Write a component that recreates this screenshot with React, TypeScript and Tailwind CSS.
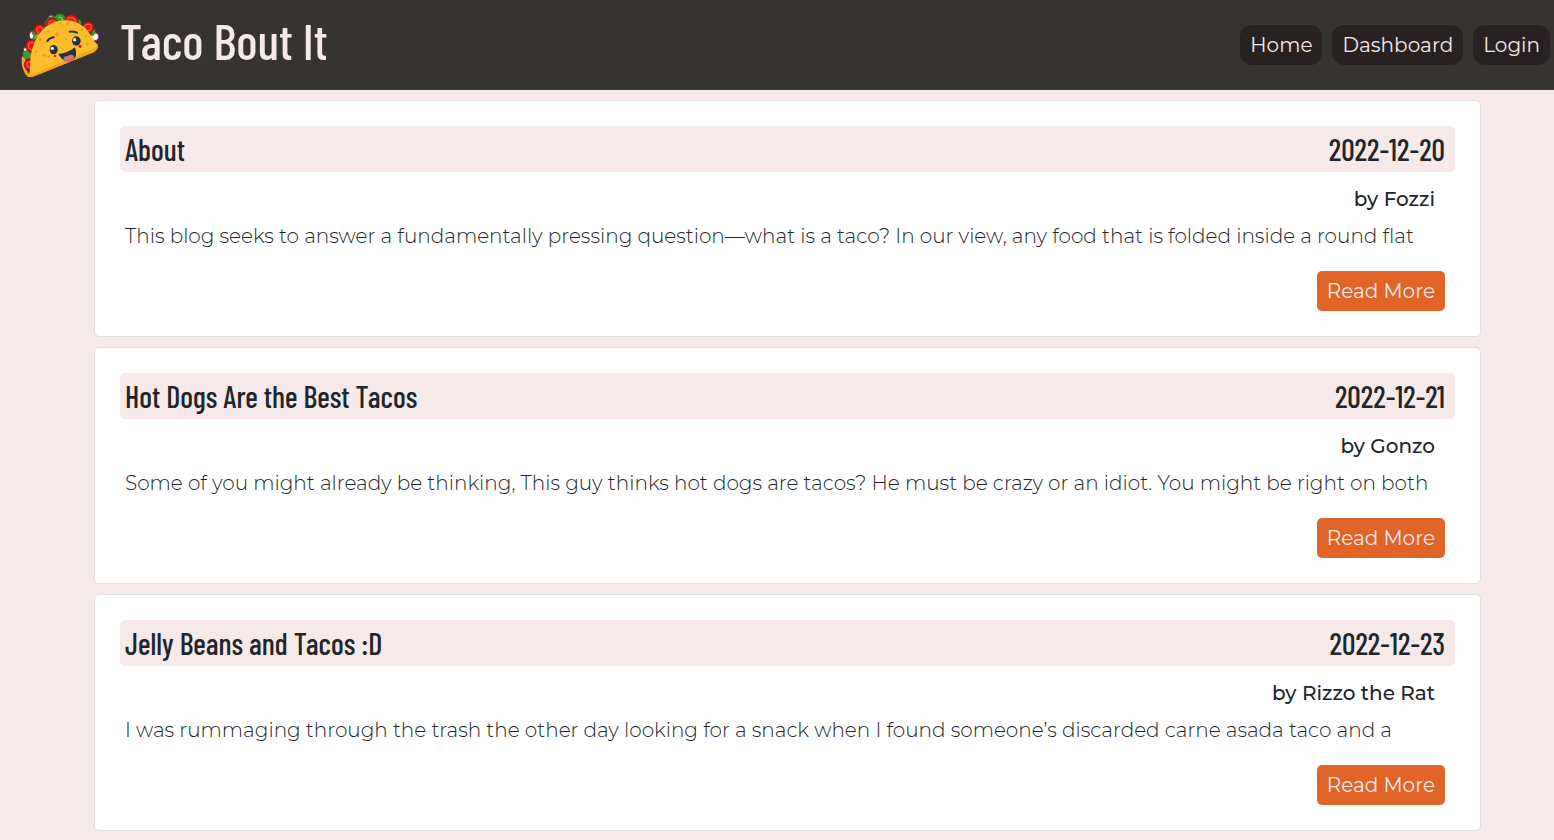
const posts = [
  {
    title: "About",
    date: "2022-12-20",
    author: "Fozzi",
    text: "This blog seeks to answer a fundamentally pressing question—what is a taco? In our view, any food that is folded inside a round flat",
  },
  {
    title: "Hot Dogs Are the Best Tacos",
    date: "2022-12-21",
    author: "Gonzo",
    text: "Some of you might already be thinking, This guy thinks hot dogs are tacos? He must be crazy or an idiot. You might be right on both",
  },
  {
    title: "Jelly Beans and Tacos :D",
    date: "2022-12-23",
    author: "Rizzo the Rat",
    text: "I was rummaging through the trash the other day looking for a snack when I found someone’s discarded carne asada taco and a",
  },
];

function TacoLogo() {
  return (
    <svg viewBox="30 36 240 198" className="h-[66px] w-20 shrink-0" aria-hidden="true">
      <path d="M36 170 C32 192 40 220 54 230 L72 228 L66 160Z" fill="#f5a623" />
      <path d="M46 178 Q40 200 56 222 L68 215 L66 175Z" fill="#7c2d12" />
      <g fill="#ffffff" stroke="#a21c6b" strokeWidth="3">
        <circle cx="70" cy="106" r="12" />
        <circle cx="124" cy="55" r="9" />
        <circle cx="254" cy="110" r="12" />
        <circle cx="48" cy="150" r="8" />
      </g>
      <g fill="#3f9b2f" stroke="#1d6b24" strokeWidth="2">
        <path d="M104 68 Q112 48 134 50 Q142 38 154 42 Q170 46 166 66 L110 90Z" />
        <path d="M66 100 Q72 80 90 84 Q104 76 114 92 L84 122Z" />
        <path d="M54 178 Q38 176 38 160 Q42 148 60 154 L72 170Z" />
        <path d="M194 62 Q206 50 216 68 L208 80Z" />
        <path d="M242 86 Q256 82 256 98 L248 108Z" />
      </g>
      <g fill="#e51b12" stroke="#8f110d" strokeWidth="3">
        <circle cx="184" cy="64" r="20" />
        <circle cx="127" cy="73" r="19" />
        <circle cx="89" cy="90" r="17" />
        <circle cx="234" cy="82" r="17" />
        <circle cx="66" cy="138" r="19" />
        <circle cx="60" cy="194" r="17" />
      </g>
      <g fill="none" stroke="#ff6247" strokeWidth="3">
        <circle cx="184" cy="64" r="12" />
        <circle cx="127" cy="73" r="11" />
        <circle cx="89" cy="90" r="9" />
        <circle cx="234" cy="82" r="10" />
        <circle cx="66" cy="138" r="11" />
        <circle cx="60" cy="194" r="9" />
      </g>
      <g fill="none" strokeLinecap="round">
        <path d="M106 84 Q104 96 94 108 M146 52 Q160 50 160 64 M72 116 Q76 106 86 104" stroke="#2f8a2c" strokeWidth="10" />
        <path d="M106 84 Q104 94 96 104 M146 52 Q156 50 158 60 M74 114 Q78 107 86 105" stroke="#8bc34a" strokeWidth="4" />
      </g>
      <path
        d="M53 230 C61 224 60 205 61 185 C63 137 84 91 125 70 C167 49 215 66 235 95 C247 110 252 126 262 132 C267 146 258 153 246 158 L72 228 Q59 233 53 230Z"
        fill="#fcbd2d"
      />
      <path d="M54 229 Q64 224 77 220 L245 150 Q257 145 263 135 Q266 148 252 157 L76 228 Q61 233 54 229Z" fill="#f2a126" />
      <g fill="#f2981f">
        <circle cx="115" cy="94" r="4" />
        <circle cx="141" cy="103" r="6" />
        <circle cx="91" cy="119" r="5" />
        <circle cx="103" cy="166" r="5" />
        <circle cx="116" cy="169" r="4" />
        <circle cx="98" cy="184" r="2" />
        <circle cx="149" cy="71" r="3" />
        <circle cx="160" cy="78" r="2" />
        <circle cx="172" cy="72" r="3" />
        <circle cx="196" cy="76" r="2" />
        <circle cx="216" cy="88" r="4" />
        <circle cx="228" cy="108" r="3" />
        <circle cx="232" cy="132" r="4" />
        <circle cx="78" cy="155" r="3" />
        <circle cx="168" cy="118" r="3" />
      </g>
      <path d="M112 123 Q119 113 131 112 M179 95 Q190 93 201 98" fill="none" stroke="#26313b" strokeWidth="6" strokeLinecap="round" />
      <ellipse cx="131" cy="149" rx="12" ry="14" fill="#25323c" />
      <ellipse cx="199" cy="123" rx="13" ry="14" fill="#25323c" />
      <circle cx="127" cy="145" r="5" fill="#ffffff" />
      <circle cx="194" cy="119" r="5" fill="#ffffff" />
      <circle cx="135" cy="168" r="4" fill="#ed1c24" />
      <circle cx="210" cy="139" r="5" fill="#ed1c24" />
      <path d="M145 162 Q174 159 195 142 Q206 171 184 183 Q159 189 145 162Z" fill="#25323c" />
      <path d="M159 178 Q163 168 174 168 Q181 161 190 166 Q196 175 184 183 Q170 188 159 178Z" fill="#d96d82" />
    </svg>
  );
}

export default function App() {
  return (
    <div className="min-h-screen bg-[#f5e9e9] pb-2 font-['Montserrat','Inter',sans-serif] text-[#212529]">
      <header className="flex h-[90px] items-center justify-between bg-[#363432] pr-1 pl-5">
        <div className="flex items-center gap-5">
          <TacoLogo />
          <h1 className="pb-2.5 font-['Barlow_Condensed','Roboto_Condensed',sans-serif] text-[50px] leading-[60px] font-medium text-[#f5e9e9]">
            Taco Bout It
          </h1>
        </div>
        <nav className="flex gap-2.5 text-xl text-[#f5e9e9]">
          {["Home", "Dashboard", "Login"].map((item) => (
            <a key={item} href="#" className="flex h-10 items-center rounded-xl bg-[#272121] px-2.5">
              {item}
            </a>
          ))}
        </nav>
      </header>
      <main className="mt-2.5 mr-[73px] ml-[94px] flex flex-col gap-2.5">
        {posts.map((post) => (
          <article key={post.title} className="rounded-[5px] border border-[#dfdfdf] bg-white p-[25px]">
            <div className="flex h-[46px] items-center justify-between rounded-[5px] bg-[#f5e9e9] pr-2.5 pl-[5px] font-['Barlow_Condensed','Roboto_Condensed',sans-serif] text-3xl font-medium">
              <h2>{post.title}</h2>
              <time dateTime={post.date}>{post.date}</time>
            </div>
            <p className="mt-3 pr-5 text-right text-xl leading-[30px] font-medium">by {post.author}</p>
            <p className="mt-[7px] pr-2 pl-[5px] text-xl leading-[30px] font-light">{post.text}</p>
            <div className="mt-5 flex justify-end pr-2.5">
              <button type="button" className="h-10 rounded-[5px] bg-[#e16428] px-2.5 text-xl text-[#f5e9e9]">
                Read More
              </button>
            </div>
          </article>
        ))}
      </main>
    </div>
  );
}
